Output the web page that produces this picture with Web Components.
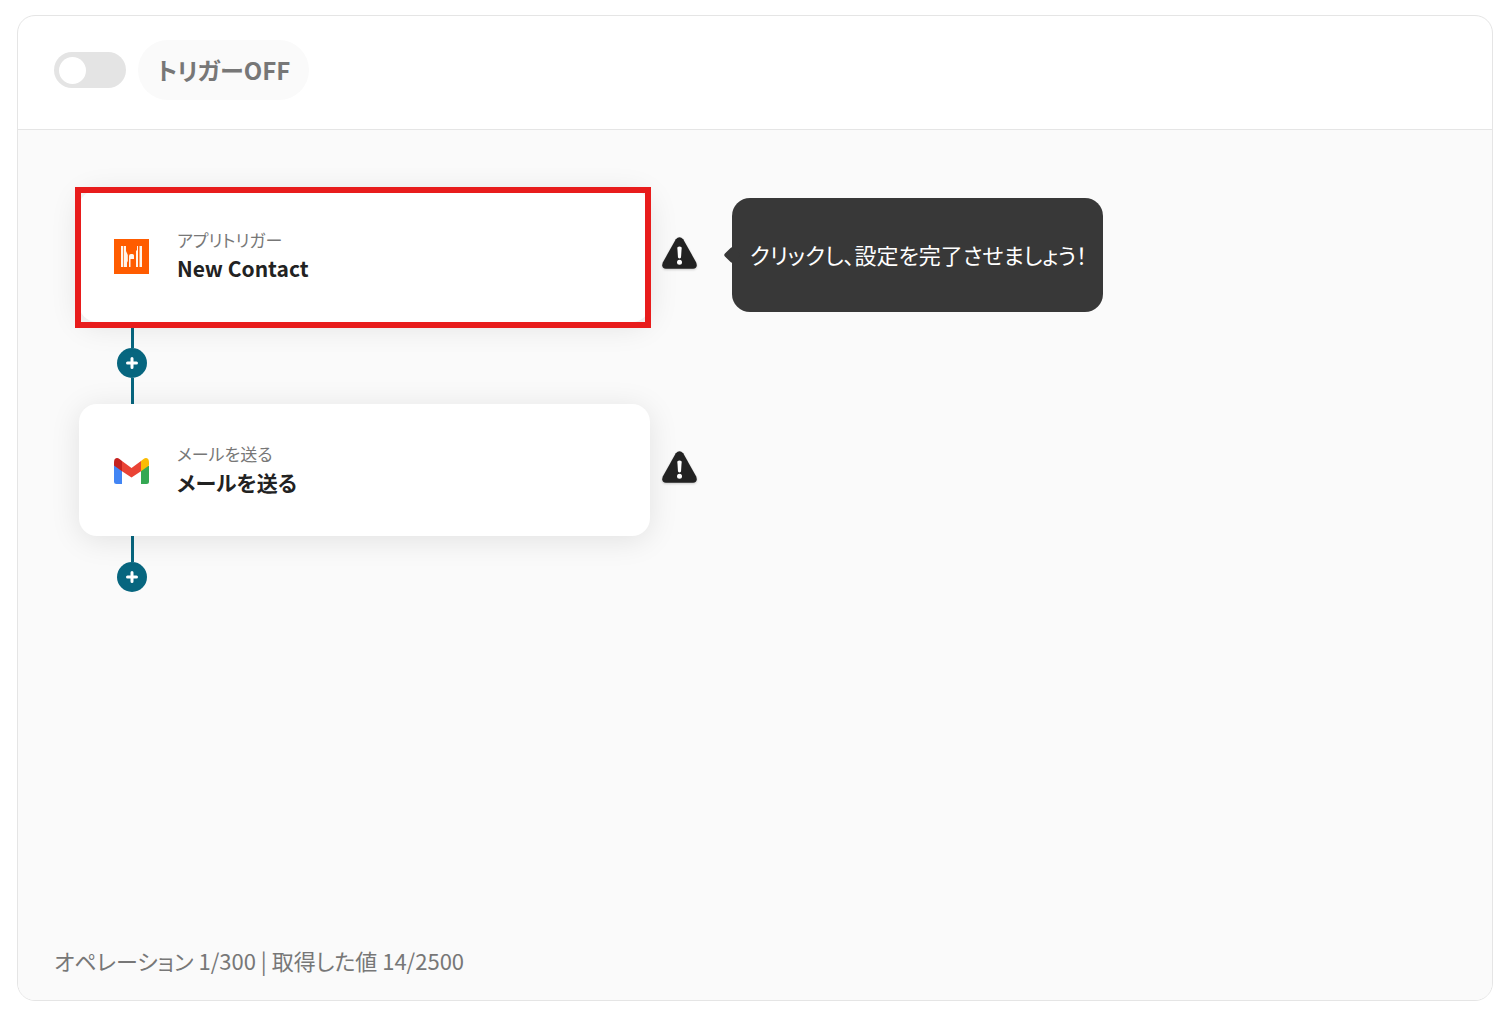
<!DOCTYPE html>
<html lang="ja">

<head>
  <meta charset="UTF-8">
  <meta name="viewport" content="width=device-width, initial-scale=1.0">
  <title>トリガー</title>
  <style>
    body {
      margin: 0;
      background: #fff;
      color: #222;
      font-family: "Noto Sans CJK JP", sans-serif;
      font-feature-settings: "palt";
    }
  </style>
</head>

<body>
  <flow-panel>
    <trigger-switch slot="header">トリガーOFF</trigger-switch>
    <flow-step highlighted>
      <app-icon slot="icon" name="hubspot"></app-icon>
      <span slot="kind">アプリトリガー</span>
      <span slot="title">New Contact</span>
      <warning-icon slot="status"></warning-icon>
      <hint-bubble slot="status">クリックし、設定を完了させましょう！</hint-bubble>
    </flow-step>
    <flow-connector></flow-connector>
    <flow-step>
      <app-icon slot="icon" name="gmail"></app-icon>
      <span slot="kind">メールを送る</span>
      <span slot="title">メールを送る</span>
      <warning-icon slot="status"></warning-icon>
    </flow-step>
    <flow-connector last></flow-connector>
    <span slot="footer">オペレーション 1/300 | 取得した値 14/2500</span>
  </flow-panel>

  <template id="flow-panel">
    <style>
      :host {
        display: flex;
        min-height: 100vh;
        box-sizing: border-box;
        padding: 15px 5px 13px 17px;
      }
      section {
        flex: 1;
        display: flex;
        flex-direction: column;
        border: 1px solid #e5e5e5;
        border-radius: 18px;
        overflow: hidden;
      }
      header {
        padding: 24px 36px 29px;
        border-bottom: 1px solid #e5e5e5;
      }
      main {
        flex: 1;
        padding: 60px 61px;
        background: #fafafa;
      }
      footer {
        padding: 0 36px 24px;
        background: #fafafa;
        color: #777;
        font-size: 22px;
        line-height: 32px;
      }
    </style>
    <section>
      <header><slot name="header"></slot></header>
      <main><slot></slot></main>
      <footer><slot name="footer"></slot></footer>
    </section>
  </template>

  <template id="trigger-switch">
    <style>
      :host {
        display: block;
      }
      label {
        display: flex;
        align-items: center;
        gap: 12px;
        cursor: pointer;
      }
      input {
        appearance: none;
        display: flex;
        align-items: center;
        box-sizing: border-box;
        width: 72px;
        height: 36px;
        margin: 0;
        padding: 0 5px;
        border-radius: 18px;
        background: #e4e4e4;
        cursor: pointer;
      }
      input::before {
        content: "";
        width: 27px;
        height: 27px;
        border-radius: 50%;
        background: #fff;
      }
      input:checked {
        justify-content: flex-end;
        background: #07667f;
      }
      span {
        padding: 0 19px;
        border-radius: 30px;
        background: #fafafa;
        color: #777;
        font-size: 24px;
        font-weight: 700;
        line-height: 60px;
      }
    </style>
    <label>
      <input type="checkbox" role="switch">
      <span><slot></slot></span>
    </label>
  </template>

  <template id="flow-step">
    <style>
      :host {
        display: flex;
        align-items: center;
        gap: 12px;
      }
      button {
        position: relative;
        display: flex;
        align-items: center;
        gap: 28px;
        width: 571px;
        height: 132px;
        padding: 0 35px;
        border: 0;
        border-radius: 18px;
        background: #fff;
        box-shadow: 0 4px 30px rgba(0, 0, 0, .1);
        color: inherit;
        font: inherit;
        font-feature-settings: inherit;
        text-align: left;
        cursor: pointer;
      }
      :host([highlighted]) button::after {
        content: "";
        position: absolute;
        inset: -3px -1px -6px -4px;
        border: 6px solid #e81c1c;
        z-index: 1;
      }
      .text {
        display: flex;
        flex-direction: column;
      }
      .kind {
        color: #777;
        font-size: 17px;
        line-height: 24px;
      }
      .title {
        font-size: 21px;
        font-weight: 700;
        line-height: 32px;
      }
      .status {
        display: flex;
        align-items: center;
        gap: 35px;
      }
    </style>
    <button type="button">
      <slot name="icon"></slot>
      <span class="text">
        <span class="kind"><slot name="kind"></slot></span>
        <span class="title"><slot name="title"></slot></span>
      </span>
    </button>
    <div class="status"><slot name="status"></slot></div>
  </template>

  <template id="flow-connector">
    <style>
      :host {
        display: flex;
        flex-direction: column;
        align-items: center;
        width: 30px;
        margin-left: 38px;
      }
      i {
        width: 3px;
        height: 26px;
        background: #07667f;
      }
      :host([last]) i:last-child {
        display: none;
      }
      button {
        display: block;
        width: 30px;
        height: 30px;
        padding: 0;
        border: 0;
        border-radius: 50%;
        background: #07667f;
        cursor: pointer;
      }
      svg {
        display: block;
      }
    </style>
    <i></i>
    <button type="button" aria-label="追加">
      <svg width="30" height="30" viewBox="0 0 30 30" stroke="#fff" stroke-width="3" stroke-linecap="round">
        <path d="M15 10.5v9M10.5 15h9" />
      </svg>
    </button>
    <i></i>
  </template>

  <template id="warning-icon">
    <style>
      :host {
        display: block;
        margin-bottom: 7px;
      }
      svg {
        display: block;
        filter: drop-shadow(0 1px 1px rgba(0, 0, 0, .2));
      }
    </style>
    <svg width="35" height="32" viewBox="0 0 35 32">
      <path d="M13.8 2.2Q17.5-1.8 21.2 2.2L34.2 25.4Q36.2 31.2 31 31.7H4Q-1.2 31.2.8 25.4Z" fill="#222" />
      <path d="M15.3 10.4Q17.5 8.8 19.7 10.4L19 20.6Q17.5 22.4 16 20.6Z" fill="#fff" />
      <circle cx="17.5" cy="25.3" r="2.5" fill="#fff" />
    </svg>
  </template>

  <template id="hint-bubble">
    <style>
      :host {
        position: relative;
        display: block;
        padding: 0 16px 2px 18px;
        margin-bottom: 2px;
        border-radius: 18px;
        background: #383838;
        color: #fff;
        font-size: 22px;
        line-height: 112px;
        white-space: nowrap;
      }
      :host::before {
        content: "";
        position: absolute;
        left: -6px;
        top: 51px;
        width: 12px;
        height: 12px;
        border-radius: 2px;
        background: #383838;
        transform: rotate(45deg);
      }
    </style>
    <slot></slot>
  </template>

  <template id="icon-hubspot">
    <svg width="35" height="35" viewBox="0 0 35 35">
      <path d="M0 0h35v35H0z" fill="#ff5c00" />
      <path d="M7 7h2.300v21H7zM10 7h2v21h-2zM12 12l1.800 4v6l-.8 1.500V28h-1zM15 17q0-2 2-2h1.500q1.500 0 1.500 1.500V20h-3.500v8H15zM23 7h1v21h-2V12l1-1zM25.500 7H28v21h-2.500z" fill="#fff5ec" />
    </svg>
  </template>

  <template id="icon-gmail">
    <svg width="35" height="35" viewBox="0 0 35 35">
      <path d="M0 9.500h8V31H2.500Q0 31 0 28.500z" fill="#4285f4" />
      <path d="M27 13h8v15.500Q35 31 32.500 31H27z" fill="#34a853" />
      <path d="M27 8l2.500-2Q32.500 4 34.400 6.500 35 7.500 35 9.500v3L27 18.300z" fill="#fbbc04" />
      <path d="M0 12.500v-3Q0 7.500.6 6.500 2.500 4 5.500 6L8 8v10.300z" fill="#c5221f" />
      <path d="M8 8l9.500 7L27 8v10.300l-9.500 6.200L8 18.300z" fill="#ea4335" />
    </svg>
  </template>

  <script>
    const define = (name) => {
      customElements.define(name, class extends HTMLElement {
        constructor() {
          super()
          const template = document.getElementById(name)
          this.attachShadow({ mode: 'open' }).append(template.content.cloneNode(true))
        }
      })
    }

    class AppIcon extends HTMLElement {
      constructor() {
        super()
        this.attachShadow({ mode: 'open' })
      }

      connectedCallback() {
        const style = document.createElement('style')
        style.textContent = `
        :host {
          display: block;
        }
        svg {
          display: block;
        }
        `
        const icon = document.getElementById(`icon-${this.getAttribute('name')}`)
        this.shadowRoot.replaceChildren(style, icon.content.cloneNode(true))
      }
    }

    define('flow-panel')
    define('trigger-switch')
    define('flow-step')
    define('flow-connector')
    define('warning-icon')
    define('hint-bubble')
    customElements.define('app-icon', AppIcon)
  </script>
</body>

</html>
